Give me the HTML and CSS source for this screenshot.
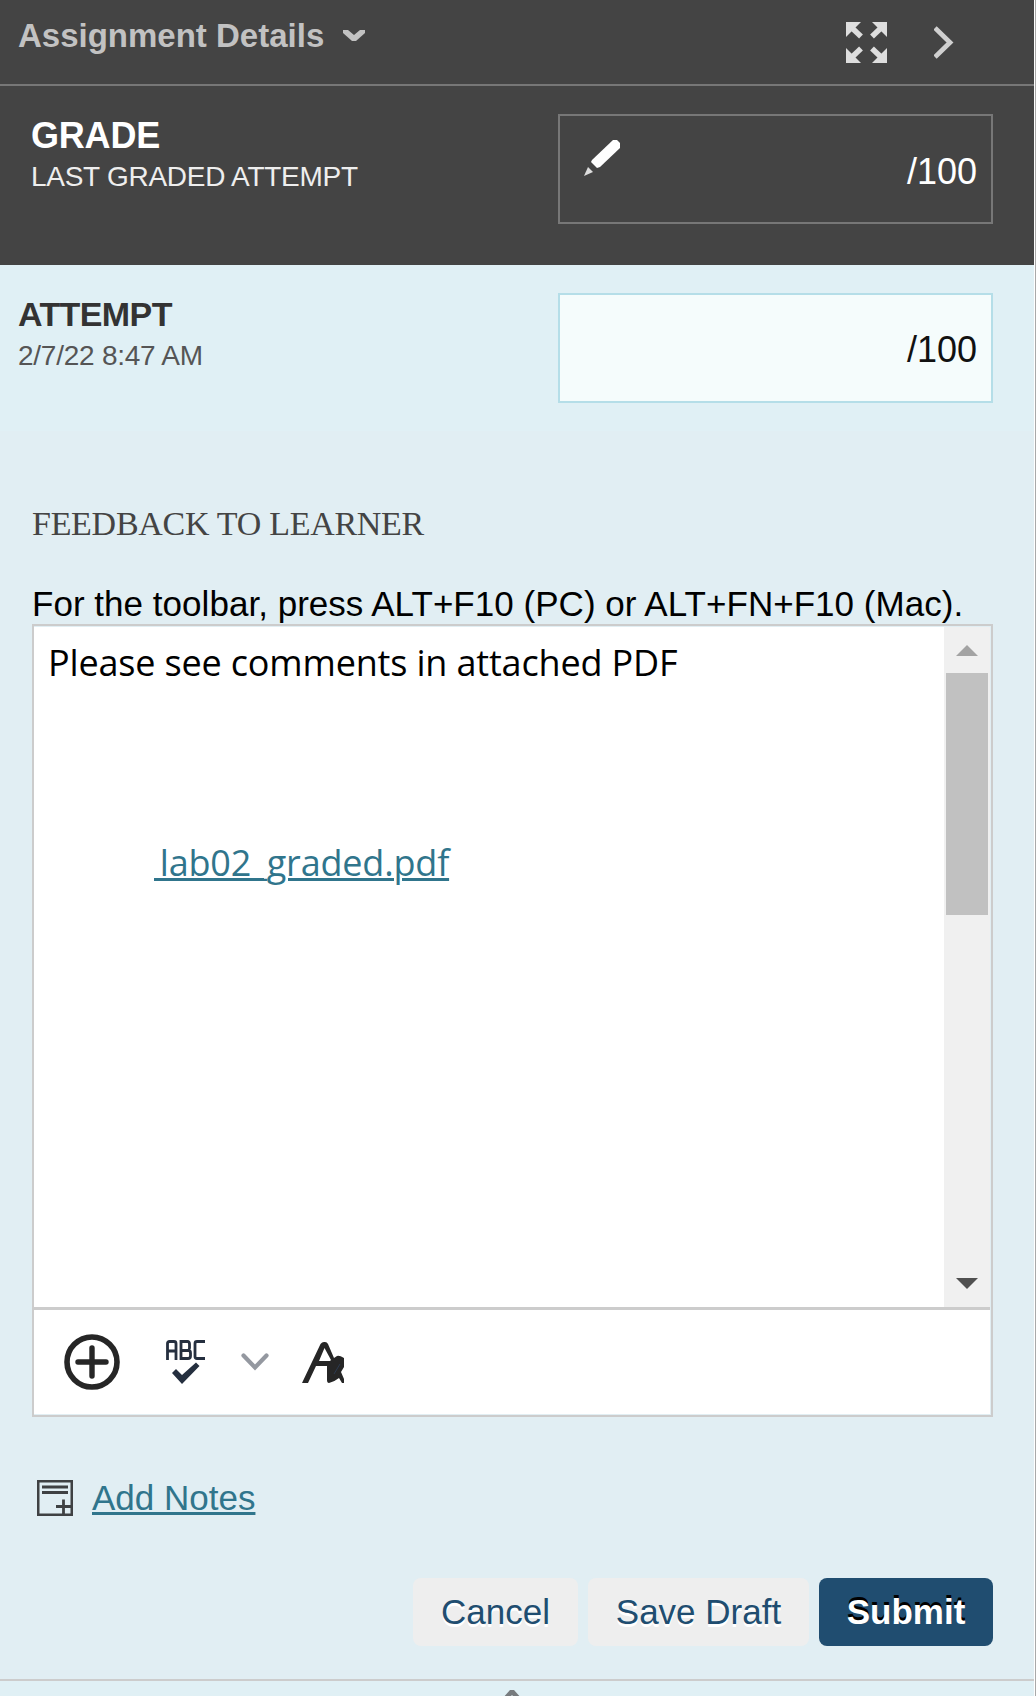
FILE: index.html
```html
<!DOCTYPE html>
<html lang="en">
<head>
<meta charset="utf-8">
<title>Assignment Details</title>
<link rel="stylesheet" href="styles.css">
</head>
<body>
<main class="panel">
  <header class="topbar">
    <h1 class="title">Assignment Details</h1>
    <svg class="title-caret" width="22" height="12" viewBox="0 0 22 12"><path d="M0 0H5L11 5L17 0H22V3L13 11H9L0 3Z" fill="#c2c2c2"/></svg>
    <svg class="expand" width="41" height="41" viewBox="0 0 41 41" fill="#dedede" stroke="#dedede">
      <g id="arrow"><path d="M0 0H15L0 15Z" stroke="none"/><path d="M5 5L15 14.500" stroke-width="5.500"/></g>
      <use href="#arrow" transform="translate(41 0) scale(-1 1)"/>
      <use href="#arrow" transform="translate(0 41) scale(1 -1)"/>
      <use href="#arrow" transform="translate(41 41) scale(-1 -1)"/>
    </svg>
    <svg class="next" width="20" height="33" viewBox="0 0 20 33"><path d="M1 2L16 16.500L1 31" fill="none" stroke="#d0d0d0" stroke-width="4.800"/></svg>
  </header>

  <section class="grade">
    <div class="labels">
      <h2 class="grade-title">GRADE</h2>
      <p class="sub">LAST GRADED ATTEMPT</p>
    </div>
    <div class="score score-dark">
      <svg class="pencil" width="36" height="36" viewBox="0 0 36 36" fill="#fff"><path d="M29 0H33L36 3V8L16 27L13 28L7 22L8 20Z"/><path d="M4 27L9 32L0 36Z" fill="#ddd"/></svg>
      <span class="points">/100</span>
    </div>
  </section>

  <section class="attempt">
    <div class="labels">
      <h2 class="attempt-title">ATTEMPT</h2>
      <p class="date">2/7/22 8:47 AM</p>
    </div>
    <div class="score score-light"><span class="points">/100</span></div>
  </section>

  <section class="feedback">
    <h3 class="feedback-title">FEEDBACK TO LEARNER</h3>
    <p class="hint">For the toolbar, press ALT+F10 (PC) or ALT+FN+F10 (Mac).</p>
    <div class="editor">
      <div class="editor-body">
        <div class="document">
          <p class="comment">Please see comments in attached PDF</p>
          <a class="attachment">&nbsp;lab02_graded.pdf</a>
        </div>
        <div class="scrollbar">
          <svg width="22" height="11" viewBox="0 0 22 11"><path d="M0 11L11 0L22 11Z" fill="#a3a3a3"/></svg>
          <div class="thumb"></div>
          <svg class="down" width="22" height="11" viewBox="0 0 22 11"><path d="M0 0H22L11 11Z" fill="#505050"/></svg>
        </div>
      </div>
      <div class="toolbar">
        <svg class="tool-add" width="56" height="56" viewBox="0 0 56 56" fill="none" stroke="#262626"><circle cx="28" cy="28" r="25" stroke-width="5.600"/><path d="M28 14V42M14 28H42" stroke-width="5.400" stroke-linecap="round"/></svg>
        <svg class="tool-spell" width="40" height="44" viewBox="0 0 40 44" fill="none" stroke="#252f3f" stroke-width="2.800"><path d="M1.500 20V3.500Q1.500 1.500 3.500 1.500H8Q10 1.500 10 3.500V20M1.500 11H10"/><path d="M15 1.500V18.500H22Q24.500 18.500 24.500 16V13Q24.500 10.500 22.500 10.500H15H22Q23.500 10 23.500 8V4Q23.500 1.500 21.500 1.500H13.600M15 18.500H13.600"/><path d="M39 1.500H31Q29 1.500 29 3.500V16.500Q29 18.500 31 18.500H39"/><path d="M6 33L10 29L16 35L30 22.500L33.500 26L16 44Z" fill="#252f3f" stroke="none"/></svg>
        <svg class="tool-more" width="28" height="18" viewBox="0 0 28 18"><path d="M2.500 2.500L14 14.500L25.500 2.500" fill="none" stroke="#9498a0" stroke-width="4.200" stroke-linecap="round"/></svg>
        <svg class="tool-text" width="42" height="42" viewBox="0 0 42 42"><path fill="#262626" d="M0 41L18.500 2Q20 0 22 0H23Q25 0 26 2L32 16L35 14Q37 13 42 16V25L39 30L42 37V41H40L37 36Q32 40 27 41Q25 41 25 38V24H14L6 41ZM17 19H28L29 18L22.500 6Z"/><path d="M32 32L38 22" stroke="#2c3a50" stroke-width="1"/></svg>
      </div>
    </div>

    <div class="notes">
      <svg width="36" height="36" viewBox="0 0 36 36" fill="none" stroke="#3f4143"><path d="M1 1H35V35H1Z" stroke-width="3"/><path d="M5 7H31M5 12.500H31M19 26.500H34M26.500 19.500V34" stroke-width="2.800"/></svg>
      <a class="notes-link">Add Notes</a>
    </div>

    <div class="actions">
      <button class="btn cancel">Cancel</button>
      <button class="btn draft">Save Draft</button>
      <button class="btn submit">Submit</button>
    </div>
  </section>

  <footer class="bottom">
    <svg width="22" height="12" viewBox="0 0 22 12"><path d="M1 10L9 1H13L21 10H15L11 6L7 10Z" fill="#777b7e"/></svg>
  </footer>
</main>
</body>
</html>
```
FILE: styles.css
```css
* { box-sizing: border-box; }
body { margin: 0; background: #fff; font-family: "Liberation Sans", Arial, sans-serif; }
h1, h2, h3, p { margin: 0; font-weight: 400; }
.panel {
  width: 1036px; height: 1696px; padding-right: 1px; overflow: hidden;
  display: flex; flex-direction: column;
  background: #fff; border-right: 1px solid #a9a9a9;
}
.panel > * { flex-shrink: 0; width: 1034px; }

.topbar { height: 86px; background: #444; border-bottom: 2px solid #777; padding-left: 18px; display: flex; align-items: flex-start; }
.title { font-size: 33px; line-height: 71px; font-weight: 700; color: #c2c2c2; width: 325px; white-space: nowrap; }
.title-caret { margin-top: 30px; }
.expand { margin: 22px 0 0 481px; }
.next { margin: 26px 0 0 47px; }

.grade { height: 179px; background: #444; color: #fff; padding: 28px 41px 0 31px; display: flex; justify-content: space-between; align-items: flex-start; }
.attempt { height: 166px; background: #e0f0f5; padding: 28px 41px 0 18px; display: flex; justify-content: space-between; align-items: flex-start; }
.labels { white-space: nowrap; }
.grade-title { margin-top: 2px; font-size: 36px; line-height: 40px; font-weight: 700; letter-spacing: -0.2px; }
.sub { margin-top: 3px; font-size: 28px; line-height: 36px; letter-spacing: -0.27px; color: #eee; }
.attempt-title { margin-top: 1px; font-size: 34px; line-height: 40px; font-weight: 700; letter-spacing: -0.6px; color: #333; }
.date { margin-top: 4px; font-size: 28px; line-height: 36px; letter-spacing: -0.25px; color: #555; }
.score { width: 435px; height: 110px; border: 2px solid; padding: 0 14px 0 24px; display: flex; align-items: flex-start; }
.score-dark { border-color: #777; }
.score-light { border-color: #b5dee8; background: #f5fcfc; color: #111; }
.pencil { margin-top: 24px; }
.points { margin: 35px 0 0 auto; font-size: 36px; line-height: 40px; }
.score-dark .points { margin-top: 36px; }

.feedback { height: 1248px; padding: 0 41px 0 32px; background: #e1eef3; }
.feedback-title { padding-top: 73px; height: 154px; font-family: "Liberation Serif", Georgia, serif; font-size: 34px; line-height: 40px; letter-spacing: -0.28px; color: #444; white-space: nowrap; }
.hint { height: 39px; font-size: 35px; line-height: 38px; letter-spacing: 0.03px; white-space: nowrap; color: #000; }
.editor { height: 793px; border: 2px solid #ccc; padding: 1px 1px 1px 0; }
.editor-body { height: 680px; display: flex; background: #fff; }
.document { flex: 1; padding: 11px 14px; font-family: "Open Sans", sans-serif; color: #000; }
.comment { font-size: 36px; line-height: 50px; letter-spacing: -0.17px; }
.attachment { display: block; margin: 150px 0 0 106px; font-size: 36px; line-height: 50px; letter-spacing: -0.18px; word-spacing: -3.4px; color: #30758c; text-decoration: underline; text-decoration-thickness: 3px; white-space: nowrap; }
.scrollbar { width: 46px; background: #f0f0f0; display: flex; flex-direction: column; align-items: center; padding: 18px 0; }
.thumb { width: 42px; height: 242px; margin-top: 17px; background: #c1c1c1; }
.down { margin-top: auto; }
.toolbar { height: 107px; background: #fff; border-top: 3px solid #ccc; display: flex; align-items: flex-start; padding-left: 30px; }
.tool-add { margin-top: 24px; }
.tool-spell { margin: 30px 0 0 46px; }
.tool-more { margin: 43px 0 0 35px; }
.tool-text { margin: 32px 0 0 33px; }

.notes { margin-top: 63px; height: 36px; padding-left: 5px; display: flex; align-items: center; }
.notes-link { margin-left: 19px; font-size: 35px; line-height: 40px; color: #30758c; text-decoration: underline; text-decoration-thickness: 3px; text-underline-offset: 2px; }
.actions { margin-top: 62px; display: flex; justify-content: flex-end; gap: 10px; }
.btn { height: 68px; padding: 0 0 1px; border: 0; border-radius: 8px; background: #eee; color: #204d70; font: 35px "Liberation Sans", Arial, sans-serif; text-shadow: 0 3px 0 #fff; white-space: nowrap; }
.cancel { width: 165px; }
.draft { width: 221px; }
.submit { width: 174px; background: #204d70; color: #fff; font-weight: 700; text-shadow: 0 -3px 0 #000; }

.bottom { height: 17px; background: #e0f0f5; border-top: 2px solid #ccc; padding-left: 501px; padding-top: 8px; overflow: hidden; }
.bottom svg { display: block; }
```
